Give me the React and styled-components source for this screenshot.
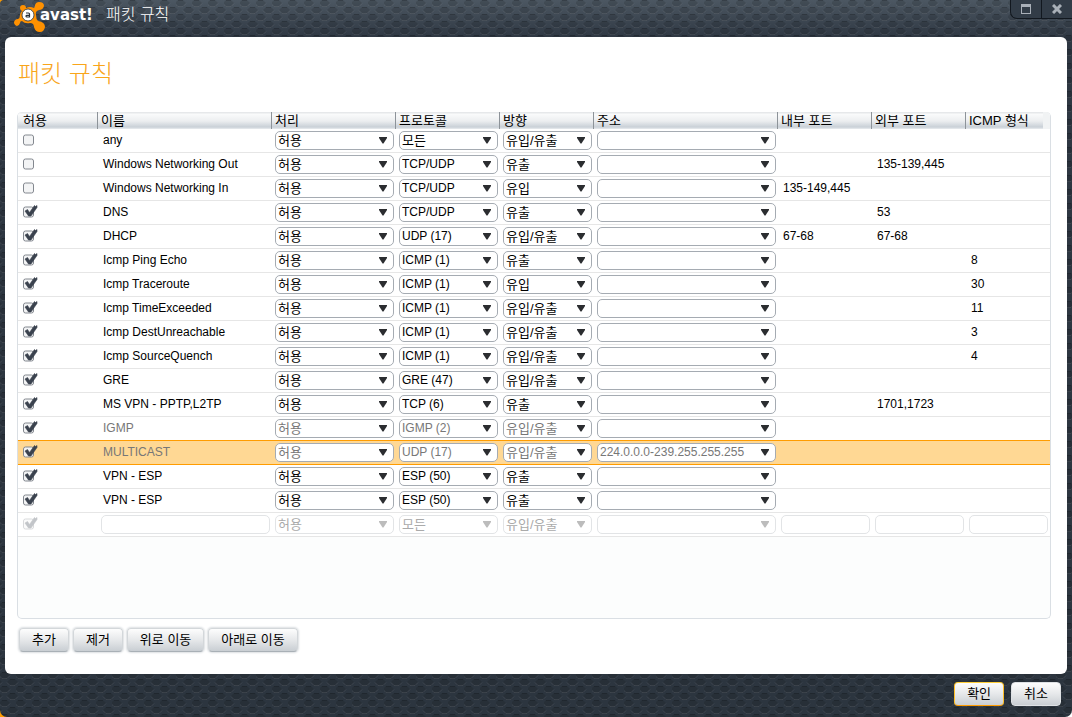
import React, { useState } from "react";
import styled, { createGlobalStyle, css } from "styled-components";

const svgUrl = (svg) => `url("data:image/svg+xml,${encodeURIComponent(svg)}")`;

const arrowOf = (color) =>
  svgUrl(
    `<svg xmlns="http://www.w3.org/2000/svg" width="8" height="7"><path d="M0 0h8v1L4.500 6.500h-1L0 1z" fill="${color}"/></svg>`
  );
const arrow = arrowOf("#2b2d30");
const disabledArrow = arrowOf("#bcbcbc");

const hexagons = svgUrl(
  `<svg xmlns="http://www.w3.org/2000/svg" width="16" height="14">
    <g fill="#000" fill-opacity=".12">
      <path d="M2 0h5l3 3-3 4H2L-1 3zM10 7h5l3 3-3 4h-5l-3-4zM-6 7h5l3 3-3 4h-5z"/>
    </g>
    <g fill="none" stroke="#fff" stroke-opacity=".09">
      <path d="M-1 3.500L2 6.500h5l3-3M7 10.500l3 3h5l3-3M-1 13.500l3-3"/>
    </g>
    <g fill="none" stroke="#000" stroke-opacity=".16">
      <path d="M2 .5h5M10 7.500h5"/>
    </g>
  </svg>`
);

const box =
  '<rect x=".5" y="2" width="10" height="10" rx="2" fill="#f3f4f5" stroke="#83888f"/>';
const uncheckedBox = svgUrl(
  `<svg xmlns="http://www.w3.org/2000/svg" width="15" height="14">${box}</svg>`
);
const checkedBox = svgUrl(
  `<svg xmlns="http://www.w3.org/2000/svg" width="15" height="14">${box}<path d="M2 6L4.500 4.500L6.500 7.500L11.500 .5L12.500 1.500L14 .5V2.500L8 11H5.500z" fill="#3a424e" stroke="#3a424e" stroke-width=".6"/></svg>`
);

const rules = [
  { name: "any", on: false, protocol: "모든", direction: "유입/유출" },
  { name: "Windows Networking Out", on: false, protocol: "TCP/UDP", direction: "유출", remote: "135-139,445" },
  { name: "Windows Networking In", on: false, protocol: "TCP/UDP", direction: "유입", local: "135-149,445" },
  { name: "DNS", on: true, protocol: "TCP/UDP", direction: "유출", remote: "53" },
  { name: "DHCP", on: true, protocol: "UDP (17)", direction: "유입/유출", local: "67-68", remote: "67-68" },
  { name: "Icmp Ping Echo", on: true, protocol: "ICMP (1)", direction: "유출", icmp: "8" },
  { name: "Icmp Traceroute", on: true, protocol: "ICMP (1)", direction: "유입", icmp: "30" },
  { name: "Icmp TimeExceeded", on: true, protocol: "ICMP (1)", direction: "유입/유출", icmp: "11" },
  { name: "Icmp DestUnreachable", on: true, protocol: "ICMP (1)", direction: "유입/유출", icmp: "3" },
  { name: "Icmp SourceQuench", on: true, protocol: "ICMP (1)", direction: "유입/유출", icmp: "4" },
  { name: "GRE", on: true, protocol: "GRE (47)", direction: "유입/유출" },
  { name: "MS VPN - PPTP,L2TP", on: true, protocol: "TCP (6)", direction: "유출", remote: "1701,1723" },
  { name: "IGMP", on: true, protocol: "IGMP (2)", direction: "유입/유출", muted: true },
  { name: "MULTICAST", on: true, protocol: "UDP (17)", direction: "유입/유출", address: "224.0.0.0-239.255.255.255", muted: true },
  { name: "VPN - ESP", on: true, protocol: "ESP (50)", direction: "유출" },
  { name: "VPN - ESP", on: true, protocol: "ESP (50)", direction: "유출" },
];

const columns = [
  { title: "허용", width: 80 },
  { title: "이름", width: 174 },
  { title: "처리", width: 124 },
  { title: "프로토콜", width: 104 },
  { title: "방향", width: 94 },
  { title: "주소", width: 184 },
  { title: "내부 포트", width: 94 },
  { title: "외부 포트", width: 94 },
  { title: "ICMP 형식" },
];

// latin-only values are set one size smaller than hangul
const isLatin = (text) => /^[\x20-\x7e]+$/.test(text);

const Choice = ({ label, value = "", disabled }) => (
  <Select aria-label={label} defaultValue={value} disabled={disabled} $small={isLatin(value)}>
    <option value={value}>{value}</option>
  </Select>
);

const Rule = ({ rule, selected, onSelect }) => (
  <Row $selected={selected} $muted={rule.muted} onClick={onSelect}>
    <CheckCell>
      <Check type="checkbox" aria-label={`${rule.name} 허용`} defaultChecked={rule.on} />
    </CheckCell>
    <TextCell>{rule.name}</TextCell>
    <Cell><Choice label="처리" value="허용" /></Cell>
    <Cell><Choice label="프로토콜" value={rule.protocol} /></Cell>
    <Cell><Choice label="방향" value={rule.direction} /></Cell>
    <Cell><Choice label="주소" value={rule.address} /></Cell>
    <TextCell>{rule.local}</TextCell>
    <TextCell>{rule.remote}</TextCell>
    <TextCell>{rule.icmp}</TextCell>
  </Row>
);

const Logo = () => (
  <Brand>
    <svg width="33" height="32" viewBox="0 0 33 32" aria-hidden="true">
      <path
        d="M6 7Q6 4 9 4Q12 4 12 7Q16 5 20 7Q21 6 21 4Q22 1 25 1Q30 1 30 5Q29 9 25 9Q21 10 22 14Q22 18 24 20Q31 21 31 26Q30 31 26 31Q21 31 20 26Q20 22 16 22Q11 23 8 20Q6 20 6 22Q5 25 3 25Q0 24 0 21Q1 18 4 18Q6 17 6 14Q6 12 8 10Q6 9 6 7z"
        fill="#ff9100"
      />
      <circle cx="14" cy="14" r="6" fill="#fff" stroke="#27303a" strokeWidth=".8" />
      <path d="M12 12h2.500q1 0 1 1v3h-2.500q-1 0-1-.8t1-.8h2.500" fill="none" stroke="#27303a" strokeWidth="1.200" />
    </svg>
    <BrandName>avast!</BrandName>
  </Brand>
);

const App = () => {
  const [selected, setSelected] = useState(13);

  return (
    <>
      <GlobalStyle />
      <Window>
        <TitleBar>
          <Logo />
          <WindowTitle>패킷 규칙</WindowTitle>
          <WindowControls>
            <ControlButton type="button" aria-label="최대화">
              <svg width="10" height="10" viewBox="0 0 10 10">
                <path d="M0 0h10v10H0zM1 3v6h8V3z" fill="#a9b0b8" fillRule="evenodd" />
              </svg>
            </ControlButton>
            <ControlButton type="button" aria-label="닫기">
              <svg width="10" height="10" viewBox="0 0 10 10">
                <path d="M1 1L9 9M9 1L1 9" stroke="#a9b0b8" strokeWidth="3" />
              </svg>
            </ControlButton>
          </WindowControls>
        </TitleBar>

        <Panel>
          <Heading>패킷 규칙</Heading>
          <TableBox>
            <Table>
              <colgroup>
                {columns.map((column) => (
                  <col key={column.title} width={column.width} />
                ))}
              </colgroup>
              <thead>
                <HeadRow>
                  {columns.map((column) => (
                    <HeadCell key={column.title} scope="col">{column.title}</HeadCell>
                  ))}
                </HeadRow>
              </thead>
              <tbody>
                {rules.map((rule, index) => (
                  <Rule
                    key={index}
                    rule={rule}
                    selected={index === selected}
                    onSelect={() => setSelected(index)}
                  />
                ))}
                <Row>
                  <CheckCell>
                    <Check type="checkbox" aria-label="새 규칙 허용" defaultChecked disabled />
                  </CheckCell>
                  <Cell><Input aria-label="이름" disabled /></Cell>
                  <Cell><Choice label="처리" value="허용" disabled /></Cell>
                  <Cell><Choice label="프로토콜" value="모든" disabled /></Cell>
                  <Cell><Choice label="방향" value="유입/유출" disabled /></Cell>
                  <Cell><Choice label="주소" disabled /></Cell>
                  <Cell><Input aria-label="내부 포트" disabled /></Cell>
                  <Cell><Input aria-label="외부 포트" disabled /></Cell>
                  <Cell><Input aria-label="ICMP 형식" disabled /></Cell>
                </Row>
              </tbody>
            </Table>
          </TableBox>
          <Actions>
            <Button type="button">추가</Button>
            <Button type="button">제거</Button>
            <Button type="button">위로 이동</Button>
            <Button type="button">아래로 이동</Button>
          </Actions>
        </Panel>

        <Footer>
          <Button type="button" $primary>확인</Button>
          <Button type="button" $flat>취소</Button>
        </Footer>
      </Window>
    </>
  );
};

const GlobalStyle = createGlobalStyle`
  * {
    box-sizing: border-box;
  }
  body {
    margin: 0;
    background: linear-gradient(to right, #ff9c00 50%, #fff 50%);
    color: #000;
    font-family: "Liberation Sans", "Noto Sans CJK KR", sans-serif;
    font-size: 13px;
  }
`;

const Window = styled.div`
  display: flex;
  flex-direction: column;
  min-height: 100vh;
  border-radius: 4px 4px 7px 7px;
  background:
    ${hexagons},
    linear-gradient(#4c5762, #2e3742 38px, #2c353f);
`;

const TitleBar = styled.header`
  display: flex;
  align-items: flex-start;
  height: 37px;
  padding-left: 14px;
`;

const Brand = styled.div`
  display: flex;
  width: 92px;
  padding-top: 1px;
  svg {
    flex: none;
  }
`;

const BrandName = styled.span`
  margin-left: -7px;
  color: #fff;
  font-family: "DejaVu Sans", sans-serif;
  font-size: 15px;
  font-weight: bold;
  line-height: 28px;
`;

const WindowTitle = styled.span`
  color: #fff;
  font-size: 16px;
  font-weight: 300;
  line-height: 30px;
`;

const WindowControls = styled.div`
  display: flex;
  margin-left: auto;
  border: solid #12181f;
  border-width: 0 0 1px 1px;
  border-radius: 0 0 0 7px;
  background: #323c47;
`;

const ControlButton = styled.button`
  display: flex;
  align-items: center;
  justify-content: center;
  width: 30px;
  height: 18px;
  padding: 0;
  border: 0;
  background: none;

  & + & {
    width: 31px;
    border-left: 1px solid #12181f;
  }
`;

const Panel = styled.main`
  display: flex;
  flex: 1;
  flex-direction: column;
  margin: 0 5px;
  padding: 22px 16px 22px 12px;
  border-radius: 6px;
  background: #fff;
`;

const Heading = styled.h1`
  margin: 0 0 23px 1px;
  color: #f9a51a;
  font-size: 24px;
  font-weight: 300;
  line-height: 30px;
`;

const TableBox = styled.div`
  flex: 1;
  overflow: hidden;
  border: 1px solid #dadfe4;
  border-top: 0;
  border-radius: 5px;
  background: #fcfdfd;
`;

const Table = styled.table`
  width: 100%;
  table-layout: fixed;
  border-collapse: separate;
  border-spacing: 0;
  background: #fff;
`;

const HeadRow = styled.tr`
  height: 17px;
  background: linear-gradient(#e6e8ea 1px, #fafbfb 2px, #eceef0 9px, #c9d0d7 15px, #e9ecef 17px);
`;

const HeadCell = styled.th`
  padding: 0 0 0 3px;
  font-weight: normal;
  line-height: 17px;
  text-align: left;
  white-space: nowrap;

  &:not(:last-child) {
    border-right: 1px solid #8d9399;
  }
  &:first-child {
    padding-left: 5px;
  }
  &:last-child {
    box-shadow: inset -7px 0 0 #f1f3f4;
  }
`;

const Cell = styled.td`
  height: 24px;
  padding: 2px 2px 2px 3px;
  border-bottom: 1px solid #e6e6e6;
  vertical-align: top;
  white-space: nowrap;
`;

const TextCell = styled(Cell)`
  padding-left: 5px;
  font-size: 12px;
  line-height: 19px;
`;

const CheckCell = styled(Cell)`
  padding: 4px 0 0 5px;
`;

const Row = styled.tr`
  ${(props) =>
    props.$muted &&
    css`
      color: #777;
      select {
        color: #777;
      }
    `}

  ${(props) =>
    props.$selected &&
    css`
      background: #ffd894;
      td {
        border-bottom-color: #ff9c00;
        box-shadow: 0 -1px 0 #ff9c00;
      }
    `}
`;

const Check = styled.input`
  display: block;
  width: 15px;
  height: 14px;
  margin: 0;
  appearance: none;
  background: ${uncheckedBox} no-repeat;

  &:checked {
    background-image: ${checkedBox};
  }
  &:disabled {
    opacity: 0.3;
  }
`;

const field = css`
  display: block;
  width: 100%;
  height: 19px;
  margin: 0;
  border: 1px solid #a5abb2;
  border-radius: 5px;
  background-color: #fff;
  color: #000;
  font: inherit;

  &:disabled {
    border-color: #e2e4e6;
    color: #aaa;
    opacity: 1;
  }
`;

const Select = styled.select`
  ${field}
  padding: 0 18px 0 2px;
  appearance: none;
  background-image: ${arrow};
  background-repeat: no-repeat;
  background-position: right 6px top 5px;
  font-size: ${(props) => (props.$small ? "12px" : "13px")};
  line-height: 17px;

  &:disabled {
    background-image: ${disabledArrow};
  }
`;

const Input = styled.input`
  ${field}
  padding: 0 3px;
`;

const Actions = styled.div`
  display: flex;
  gap: 4px;
  margin: 9px 0 0 2px;
`;

const Button = styled.button`
  height: 24px;
  padding: 0 12px;
  border: 1px solid #d3d7da;
  border-bottom-color: #a9b0b6;
  border-radius: 4px;
  background: linear-gradient(#fdfdfd, #e6e8ea 50%, #c9ced3);
  box-shadow: 0 0 2px 1px #dcdfe2;
  color: #000;
  font: inherit;
  line-height: 20px;

  ${(props) =>
    (props.$flat || props.$primary) &&
    css`
      border-color: #dfe2e5;
      box-shadow: none;
    `}

  ${(props) =>
    props.$primary &&
    css`
      border-color: #ffcf3a #ffc02a #ff9c00;
    `}
`;

const Footer = styled.footer`
  display: flex;
  justify-content: flex-end;
  gap: 7px;
  padding: 8px 11px 11px;
`;

export default App;
